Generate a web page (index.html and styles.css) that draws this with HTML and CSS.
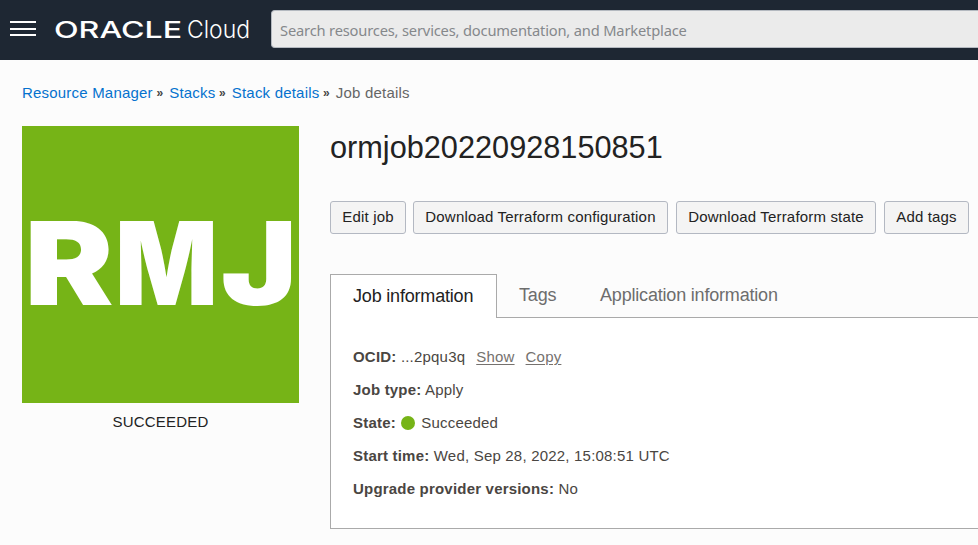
FILE: index.html
```html
<!DOCTYPE html>
<html lang="en">
<head>
<meta charset="utf-8">
<title>Job details</title>
<link rel="stylesheet" href="styles.css">
</head>
<body>
<header class="topbar">
  <div class="menu"><span></span><span></span><span></span></div>
  <svg class="brand" width="198" height="34" viewBox="0 0 198 34">
    <text class="oracle" x="0" y="23" textLength="128" lengthAdjust="spacingAndGlyphs">ORACLE</text>
    <text class="cloud" x="133" y="23" textLength="63" lengthAdjust="spacingAndGlyphs">Cloud</text>
  </svg>
  <div class="search">Search resources, services, documentation, and Marketplace</div>
</header>
<nav class="crumbs">
  <a>Resource Manager</a><i>»</i><a>Stacks</a><i>»</i><a>Stack details</a><i>»</i><span>Job details</span>
</nav>
<main class="layout">
  <aside class="side">
    <svg class="tile" width="277" height="277" viewBox="0 0 277 277">
      <text class="rmj" x="2.5" y="179" textLength="89" lengthAdjust="spacingAndGlyphs">R</text>
      <text class="rmj" x="93" y="179" textLength="103" lengthAdjust="spacingAndGlyphs">M</text>
      <text class="rmj" x="199" y="179" textLength="76" lengthAdjust="spacingAndGlyphs">J</text>
    </svg>
    <p class="status">SUCCEEDED</p>
  </aside>
  <section class="content">
    <h1>ormjob20220928150851</h1>
    <div class="actions">
      <button class="b1">Edit job</button>
      <button class="b2">Download Terraform configuration</button>
      <button class="b3">Download Terraform state</button>
      <button class="b4">Add tags</button>
    </div>
    <div class="tabs">
      <div class="tab active">Job information</div>
      <div class="tab tags">Tags</div>
      <div class="tab app">Application information</div>
    </div>
    <div class="panel">
      <p><b>OCID:</b> <span>...2pqu3q</span><a class="show">Show</a><a class="copy">Copy</a></p>
      <p><b>Job type:</b> <span>Apply</span></p>
      <p><b>State:</b> <em class="dot"></em><span>Succeeded</span></p>
      <p><b>Start time:</b> <span>Wed, Sep 28, 2022, 15:08:51 UTC</span></p>
      <p><b>Upgrade provider versions:</b> <span>No</span></p>
    </div>
  </section>
</main>
</body>
</html>
```
FILE: styles.css
```css
* { box-sizing: border-box; }
body {
  margin: 0;
  width: 978px;
  height: 545px;
  overflow: hidden;
  background: #fcfcfc;
  font: 15px/20px "Liberation Sans", Arial, sans-serif;
  letter-spacing: 0.2px;
  color: #222;
}
.topbar {
  display: flex;
  height: 60px;
  background: #1e2733;
  padding: 10px 0 0 10px;
}
.menu {
  width: 26px;
  padding-top: 11px;
  margin-right: 18px;
}
.menu span {
  display: block;
  height: 2px;
  background: #fff;
  margin-bottom: 4.5px;
}
.brand { margin-top: 5px; margin-right: 19px; flex: none; overflow: visible; letter-spacing: 0; }
.brand text { fill: #fff; }
.oracle { font: 500 23px Inter, sans-serif; }
.cloud { font: 300 24px Inter, sans-serif; }
.search {
  flex: 1;
  height: 38px;
  border: 1px solid #b4b9c0;
  border-right: 0;
  border-radius: 4px 0 0 4px;
  background: #ebebeb;
  color: #85888b;
  font: 14.7px/38px "Noto Sans", "Open Sans", sans-serif;
  letter-spacing: -0.18px;
  padding-left: 8px;
  white-space: nowrap;
}
.crumbs {
  display: flex;
  padding: 23px 0 0 22px;
  height: 66px;
  color: #666;
}
.crumbs a { color: #0572ce; }
.crumbs i {
  width: 16.4px;
  padding-left: 3.6px;
  font: bold 12px/20px "Liberation Sans", sans-serif;
  color: #444;
}
.layout { display: flex; padding-left: 22px; }
.side { width: 277px; margin-right: 31px; flex: none; }
.tile { display: block; background: #76b417; letter-spacing: 0; }
.rmj { font: 900 115px Inter, sans-serif; fill: #fff; }
.status { margin: 9px 0 0; text-align: center; }
.content { flex: 1; min-width: 0; }
h1 {
  margin: 0;
  height: 75px;
  font-size: 30.7px;
  line-height: 43px;
  font-weight: 400;
  letter-spacing: 0;
}
.actions { display: flex; gap: 8px; height: 73px; }
button {
  height: 33px;
  border: 1px solid #b3b8c2;
  border-radius: 3px;
  background: #f4f4f4;
  color: #222;
  font: 15px/20px "Liberation Sans", Arial, sans-serif;
  letter-spacing: 0.17px;
  padding: 0 0 1px;
  white-space: nowrap;
}
.b1 { width: 76px; margin-right: -1px; }
.b2 { width: 255px; }
.b3 { width: 200px; }
.b4 { width: 85px; }
.tabs { display: flex; height: 44px; font-size: 18px; color: #6d6d6d; letter-spacing: -0.19px; }
.tab { border-bottom: 1px solid #aaa; line-height: 42px; white-space: nowrap; }
.tab.active {
  width: 167px;
  border: 1px solid #aaa;
  border-bottom: 0;
  background: #fff;
  color: #222;
  padding-left: 22px;
}
.tab.tags { width: 103px; padding-left: 22px; }
.tab.app { flex: 1; }
.panel {
  height: 211px;
  border-left: 1px solid #aaa;
  border-bottom: 1px solid #aaa;
  background: #fff;
  padding: 29px 0 0 22px;
  color: #4a4642;
}
.panel p { margin: 0 0 13px; white-space: nowrap; }
.panel a { color: #75716e; text-decoration: underline; text-underline-offset: 2px; }
.show { margin: 0 11px; }
.dot {
  display: inline-block;
  width: 14px;
  height: 14px;
  border-radius: 50%;
  background: #76b417;
  margin: 0 6px 0 1px;
  vertical-align: -2px;
}
```
